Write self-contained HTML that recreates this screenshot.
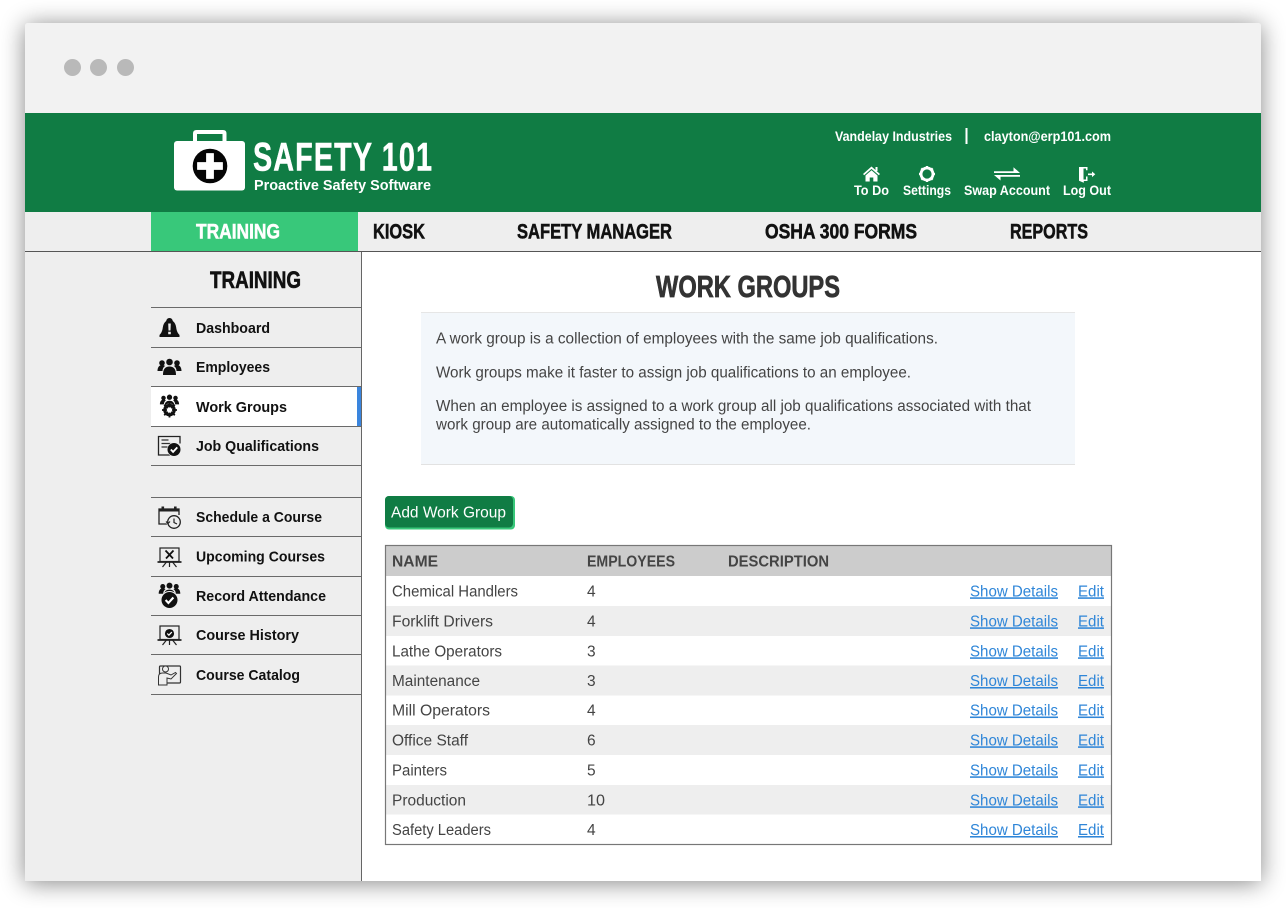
<!DOCTYPE html>
<html lang="en">
<head>
<meta charset="utf-8">
<title>Safety 101 - Work Groups</title>
<style>
html,body{margin:0;padding:0;background:#fff;width:1286px;height:908px;overflow:hidden}
#win{position:absolute;left:25px;top:23px;width:1236px;height:858px;background:#fff;box-shadow:0 2px 24px rgba(0,0,0,.48);border-radius:3px 3px 0 0}
#art{position:absolute;left:0;top:0}
text{font-family:"Liberation Sans",sans-serif;white-space:pre}
.w{fill:#fff;font-weight:700;font-size:14px}
.n{font-weight:700;font-size:21px;fill:#111;stroke:#111;stroke-width:.55px}
.s{font-weight:700;font-size:15px;fill:#111}
.p{font-size:15.5px;fill:#444}
.t{font-size:15.5px;fill:#444}
.h{font-size:15.5px;font-weight:700;fill:#444}
.l{font-size:15.5px;fill:#2f86d8;text-decoration:underline}
</style>
</head>
<body>
<div id="win"></div>
<svg id="art" width="1286" height="908" viewBox="0 0 1286 908" xmlns="http://www.w3.org/2000/svg">
<defs>
<g id="people">
<circle cx="-7.500" cy="-5" r="2.800"/><circle cx="7.500" cy="-5" r="2.800"/><circle cx="0" cy="-6" r="3.300"/>
<path d="M-12 3c0-4 2-6 4.500-6 1.300 0 2.200.3 3 1-1.500 1-2.500 2.700-2.500 5zM12 3c0-4-2-6-4.500-6-1.300 0-2.200.3-3 1 1.500 1 2.500 2.700 2.500 5zM-6.500 7c0-6 2.300-8.500 6.500-8.500s6.500 2.500 6.500 8.500z"/>
</g>
<g id="check">
<circle r="6.500" fill="#111"/>
<path d="M-3.200 0l2.300 2.400 4.200-4.500" fill="none" stroke="#fff" stroke-width="1.800"/>
</g>
<g id="screen" fill="none" stroke="#222" stroke-width="1.200">
<rect x="-9.500" y="-9" width="19" height="13.500"/>
<path d="M-12 5h24" stroke-width="1.800"/>
<path d="M-3 5l-4 5M3 5l4 5M0 5v5"/>
</g>
</defs>

<!-- title bar -->
<path d="M25 113V26q0-3 3-3H1258q3 0 3 3V113z" fill="#f2f2f2"/>
<circle cx="72.500" cy="67.500" r="8.500" fill="#b9b9b9"/>
<circle cx="98.500" cy="67.500" r="8.500" fill="#b9b9b9"/>
<circle cx="125.500" cy="67.500" r="8.500" fill="#b9b9b9"/>

<!-- header -->
<rect x="25" y="113" width="1236" height="99" fill="#107c44"/>
<!-- logo -->
<path d="M195 142v-8.500q0-1.500 1.500-1.500h26.500q1.500 0 1.500 1.500v8.500" fill="none" stroke="#fff" stroke-width="4"/>
<rect x="174" y="141" width="71" height="49.500" rx="3" fill="#fff"/>
<circle cx="210" cy="166" r="17.300" fill="#050505"/>
<path d="M206.500 153.500h7v9h9v7h-9v9h-7v-9h-9v-7h9z" fill="#fff" stroke="#fff" stroke-width=".8" stroke-linejoin="round"/>
<text transform="translate(253 170.500) scale(.72 1)" x="0" y="0" fill="#fff" stroke="#fff" stroke-width=".5" font-size="40" font-weight="700" textLength="248.600" lengthAdjust="spacing">SAFETY 101</text>
<text x="254" y="190" fill="#fff" font-size="14.500" font-weight="700" textLength="177" lengthAdjust="spacingAndGlyphs">Proactive Safety Software</text>

<!-- header right -->
<text class="w" x="835" y="141" textLength="117" lengthAdjust="spacingAndGlyphs">Vandelay Industries</text>
<rect x="965.500" y="128" width="2" height="16" fill="#fff"/>
<text class="w" x="984" y="141" textLength="127" lengthAdjust="spacingAndGlyphs">clayton@erp101.com</text>
<text class="w" x="854" y="195" textLength="35" lengthAdjust="spacingAndGlyphs">To Do</text>
<text class="w" x="903" y="195" textLength="48" lengthAdjust="spacingAndGlyphs">Settings</text>
<text class="w" x="964" y="195" textLength="86" lengthAdjust="spacingAndGlyphs">Swap Account</text>
<text class="w" x="1063" y="195" textLength="48" lengthAdjust="spacingAndGlyphs">Log Out</text>
<!-- home -->
<path d="M863 174l8.500-7.500 8.500 7.500-1.200 1.300-7.300-6.400-7.300 6.400zM865.500 175.500l6-5.200 6 5.200v6h-4.200v-4h-3.600v4h-4.200z" fill="#fff"/>
<rect x="875.500" y="167" width="2" height="4" fill="#fff"/>
<!-- gear -->
<circle cx="927" cy="174" r="6" fill="none" stroke="#fff" stroke-width="2.800"/>
<g stroke="#fff" stroke-width="2.200"><path d="M927 166v2M927 180v2M919 174h2M933 174h2M921.300 168.300l1.400 1.400M931.300 178.300l1.400 1.400M921.300 179.700l1.400-1.400M931.300 169.700l1.400-1.400"/></g>
<!-- swap -->
<path d="M994 171.200h19.500v-4l6.500 5.800h-26z" fill="#fff"/>
<path d="M1020 175h-26l6.500 5.500v-3.800h19.500z" fill="#fff"/>
<!-- log out -->
<path d="M1079 167h8.500v3.300h-1.500v-1.800h-2.500v11h2.500v-3h1.500v4.500h-3.700v1.800l-4.800-2z" fill="#fff"/>
<path d="M1088 173.500h4v-2l3.300 2.800-3.300 2.800v-2h-4z" fill="#fff"/>

<!-- nav -->
<rect x="25" y="212" width="1236" height="39" fill="#eeeeee"/>
<rect x="25" y="251" width="1236" height="1" fill="#555"/>
<rect x="151" y="212" width="207" height="39" fill="#38c87a"/>
<text class="n" style="fill:#fff;stroke:#fff" x="196" y="238.500" textLength="84" lengthAdjust="spacingAndGlyphs">TRAINING</text>
<text class="n" x="373" y="238.500" textLength="52" lengthAdjust="spacingAndGlyphs">KIOSK</text>
<text class="n" x="517" y="238.500" textLength="155" lengthAdjust="spacingAndGlyphs">SAFETY MANAGER</text>
<text class="n" x="765" y="238.500" textLength="152" lengthAdjust="spacingAndGlyphs">OSHA 300 FORMS</text>
<text class="n" x="1010" y="238.500" textLength="78" lengthAdjust="spacingAndGlyphs">REPORTS</text>

<!-- sidebar -->
<rect x="25" y="252" width="336" height="629" fill="#eeeeee"/>
<rect x="361" y="252" width="1" height="629" fill="#666"/>
<text x="210" y="288" font-size="24" font-weight="700" fill="#111" stroke="#111" stroke-width=".6" textLength="91" lengthAdjust="spacingAndGlyphs">TRAINING</text>
<rect x="151" y="387" width="210" height="39" fill="#fff"/>
<rect x="357" y="387" width="4" height="39" fill="#3a85de"/>
<g fill="#6a6a6a">
<rect x="151" y="307" width="210" height="1"/>
<rect x="151" y="347" width="210" height="1"/>
<rect x="151" y="386" width="210" height="1"/>
<rect x="151" y="426" width="210" height="1"/>
<rect x="151" y="465" width="210" height="1"/>
<rect x="151" y="497" width="210" height="1"/>
<rect x="151" y="536" width="210" height="1"/>
<rect x="151" y="576" width="210" height="1"/>
<rect x="151" y="615" width="210" height="1"/>
<rect x="151" y="654" width="210" height="1"/>
<rect x="151" y="694" width="210" height="1"/>
</g>
<text class="s" x="196" y="333" textLength="74" lengthAdjust="spacingAndGlyphs">Dashboard</text>
<text class="s" x="196" y="372" textLength="74" lengthAdjust="spacingAndGlyphs">Employees</text>
<text class="s" x="196" y="412" textLength="91" lengthAdjust="spacingAndGlyphs">Work Groups</text>
<text class="s" x="196" y="451" textLength="123" lengthAdjust="spacingAndGlyphs">Job Qualifications</text>
<text class="s" x="196" y="522" textLength="126" lengthAdjust="spacingAndGlyphs">Schedule a Course</text>
<text class="s" x="196" y="561.500" textLength="129" lengthAdjust="spacingAndGlyphs">Upcoming Courses</text>
<text class="s" x="196" y="601" textLength="130" lengthAdjust="spacingAndGlyphs">Record Attendance</text>
<text class="s" x="196" y="640" textLength="103" lengthAdjust="spacingAndGlyphs">Course History</text>
<text class="s" x="196" y="680" textLength="104" lengthAdjust="spacingAndGlyphs">Course Catalog</text>

<!-- sidebar icons -->
<g fill="#111">
<path d="M169.500 318c2 0 3 1.500 3.300 3 2 1.500 3 3.800 3.400 6.500.4 3 1.200 5.300 3.300 7.500v2h-20v-2c2.100-2.200 2.900-4.500 3.300-7.500.4-2.700 1.400-5 3.400-6.500.3-1.500 1.300-3 3.300-3z"/>
<path d="M168.200 323.500h2.600l-.3 7h-2zM168.200 331.800h2.600v2.500h-2.600z" fill="#eee"/>
<use href="#people" transform="translate(169.500 368)"/>
<use href="#people" transform="translate(169.500 402) scale(.8)"/>
<use href="#people" transform="translate(169.500 591) scale(.9)"/>
<circle cx="169.500" cy="409" r="5.500" fill="#fff"/>
<circle cx="169.500" cy="410" r="4.800" fill="none" stroke="#111" stroke-width="3"/>
<path d="M169.500 402.500v15M162 410h15M164.200 404.700l10.600 10.600M164.200 415.300l10.600-10.600" stroke="#111" stroke-width="1.800"/>
<circle cx="169.500" cy="410" r="2.600" fill="#fff"/>
<g transform="translate(169.500 600)"><circle r="9" fill="#eee"/><circle r="8" fill="#111"/><path d="M-3.900 0l2.800 3 5-5.500" fill="none" stroke="#fff" stroke-width="2.100"/></g>
</g>
<!-- job qualifications -->
<path d="M172 455h-13.500v-18.500h21.500v7" fill="none" stroke="#222" stroke-width="1.300"/>
<path d="M161.500 440h7M161.500 443.500h9M161.500 447h6" stroke="#333" stroke-width="1.200"/>
<circle cx="174.500" cy="449.500" r="7.500" fill="#eee"/>
<use href="#check" transform="translate(174 449.500)"/>
<!-- schedule -->
<path d="M167 524h-8v-15h20v6" fill="none" stroke="#222" stroke-width="1.300"/>
<rect x="159" y="508.500" width="20" height="3" fill="#222"/>
<rect x="161.500" y="506.500" width="2.600" height="4" fill="#222"/>
<rect x="174" y="506.500" width="2.600" height="4" fill="#222"/>
<circle cx="174" cy="522" r="7.500" fill="#eee"/>
<circle cx="174" cy="522" r="6.300" fill="none" stroke="#222" stroke-width="1.300"/>
<path d="M174 518.500v4l3 1.500M166 521.500l2 2 2-2" fill="none" stroke="#222" stroke-width="1.200"/>
<!-- upcoming -->
<use href="#screen" transform="translate(169.500 557)"/>
<path d="M165.500 550.500l7.500 8M173.500 550.500l-7.500 8" stroke="#111" stroke-width="1.800"/>
<!-- history -->
<use href="#screen" transform="translate(169.500 635)"/>
<use href="#check" transform="translate(169.500 633.500) scale(.7)"/>
<!-- catalog -->
<rect x="159.500" y="666" width="21" height="17" rx="1" fill="none" stroke="#333" stroke-width="1.200"/>
<path d="M158.500 685v-8q0-4 4-4h3.500l5 2 4.500-2.500 1 1-5.500 5.500-4-1v7z" fill="#eee" stroke="#333" stroke-width="1"/>
<circle cx="165.500" cy="669" r="3" fill="#eee" stroke="#333" stroke-width="1"/>

<!-- main -->
<text x="656" y="297" font-size="31" font-weight="700" fill="#333" stroke="#333" stroke-width=".7" textLength="184" lengthAdjust="spacingAndGlyphs">WORK GROUPS</text>
<rect x="421" y="312" width="654" height="153" fill="#f3f7fb"/>
<rect x="421" y="312" width="654" height="1" fill="#e6e6e6"/>
<rect x="421" y="464" width="654" height="1" fill="#e2e2e2"/>
<text class="p" x="436" y="343.700" textLength="502" lengthAdjust="spacingAndGlyphs">A work group is a collection of employees with the same job qualifications.</text>
<text class="p" x="436" y="377.500" textLength="475" lengthAdjust="spacingAndGlyphs">Work groups make it faster to assign job qualifications to an employee.</text>
<text class="p" x="436" y="411" textLength="595" lengthAdjust="spacingAndGlyphs">When an employee is assigned to a work group all job qualifications associated with that</text>
<text class="p" x="436" y="429.500" textLength="375" lengthAdjust="spacingAndGlyphs">work group are automatically assigned to the employee.</text>

<!-- button -->
<rect x="385" y="496" width="130" height="33.500" rx="4" fill="#38c87a"/>
<rect x="385" y="496" width="128" height="31.500" rx="4" fill="#107c44"/>
<text x="391" y="517.500" font-size="15.500" fill="#fff" textLength="115" lengthAdjust="spacingAndGlyphs">Add Work Group</text>

<!-- table -->
<rect x="385.500" y="545.500" width="726" height="299" fill="#fff"/>
<rect x="386" y="546" width="725" height="30" fill="#cccccc"/>
<g fill="#eeeeee">
<rect x="386" y="606" width="725" height="30"/>
<rect x="386" y="665.500" width="725" height="30"/>
<rect x="386" y="725" width="725" height="30"/>
<rect x="386" y="785" width="725" height="29.500"/>
</g>
<rect x="385.500" y="545.500" width="726" height="299" fill="none" stroke="#777" stroke-width="1.200"/>
<text class="h" x="392" y="566.300" textLength="46" lengthAdjust="spacingAndGlyphs">NAME</text>
<text class="h" x="587" y="566.300" textLength="88" lengthAdjust="spacingAndGlyphs">EMPLOYEES</text>
<text class="h" x="728" y="566.300" textLength="101" lengthAdjust="spacingAndGlyphs">DESCRIPTION</text>

<text class="t" x="392" y="596.300" textLength="126" lengthAdjust="spacingAndGlyphs">Chemical Handlers</text><text class="t" x="587" y="596.300">4</text>
<text class="l" x="970" y="596.300" textLength="88" lengthAdjust="spacingAndGlyphs">Show Details</text><text class="l" x="1078" y="596.300" textLength="26" lengthAdjust="spacingAndGlyphs">Edit</text>
<text class="t" x="392" y="626.300" textLength="101" lengthAdjust="spacingAndGlyphs">Forklift Drivers</text><text class="t" x="587" y="626.300">4</text>
<text class="l" x="970" y="626.300" textLength="88" lengthAdjust="spacingAndGlyphs">Show Details</text><text class="l" x="1078" y="626.300" textLength="26" lengthAdjust="spacingAndGlyphs">Edit</text>
<text class="t" x="392" y="656.300" textLength="110" lengthAdjust="spacingAndGlyphs">Lathe Operators</text><text class="t" x="587" y="656.300">3</text>
<text class="l" x="970" y="656.300" textLength="88" lengthAdjust="spacingAndGlyphs">Show Details</text><text class="l" x="1078" y="656.300" textLength="26" lengthAdjust="spacingAndGlyphs">Edit</text>
<text class="t" x="392" y="686" textLength="88" lengthAdjust="spacingAndGlyphs">Maintenance</text><text class="t" x="587" y="686">3</text>
<text class="l" x="970" y="686" textLength="88" lengthAdjust="spacingAndGlyphs">Show Details</text><text class="l" x="1078" y="686" textLength="26" lengthAdjust="spacingAndGlyphs">Edit</text>
<text class="t" x="392" y="715.500" textLength="98" lengthAdjust="spacingAndGlyphs">Mill Operators</text><text class="t" x="587" y="715.500">4</text>
<text class="l" x="970" y="715.500" textLength="88" lengthAdjust="spacingAndGlyphs">Show Details</text><text class="l" x="1078" y="715.500" textLength="26" lengthAdjust="spacingAndGlyphs">Edit</text>
<text class="t" x="392" y="745.300" textLength="76" lengthAdjust="spacingAndGlyphs">Office Staff</text><text class="t" x="587" y="745.300">6</text>
<text class="l" x="970" y="745.300" textLength="88" lengthAdjust="spacingAndGlyphs">Show Details</text><text class="l" x="1078" y="745.300" textLength="26" lengthAdjust="spacingAndGlyphs">Edit</text>
<text class="t" x="392" y="775.300" textLength="55" lengthAdjust="spacingAndGlyphs">Painters</text><text class="t" x="587" y="775.300">5</text>
<text class="l" x="970" y="775.300" textLength="88" lengthAdjust="spacingAndGlyphs">Show Details</text><text class="l" x="1078" y="775.300" textLength="26" lengthAdjust="spacingAndGlyphs">Edit</text>
<text class="t" x="392" y="805.300" textLength="74" lengthAdjust="spacingAndGlyphs">Production</text><text class="t" x="587" y="805.300" textLength="18" lengthAdjust="spacingAndGlyphs">10</text>
<text class="l" x="970" y="805.300" textLength="88" lengthAdjust="spacingAndGlyphs">Show Details</text><text class="l" x="1078" y="805.300" textLength="26" lengthAdjust="spacingAndGlyphs">Edit</text>
<text class="t" x="392" y="835" textLength="99" lengthAdjust="spacingAndGlyphs">Safety Leaders</text><text class="t" x="587" y="835">4</text>
<text class="l" x="970" y="835" textLength="88" lengthAdjust="spacingAndGlyphs">Show Details</text><text class="l" x="1078" y="835" textLength="26" lengthAdjust="spacingAndGlyphs">Edit</text>
</svg>
</body>
</html>
